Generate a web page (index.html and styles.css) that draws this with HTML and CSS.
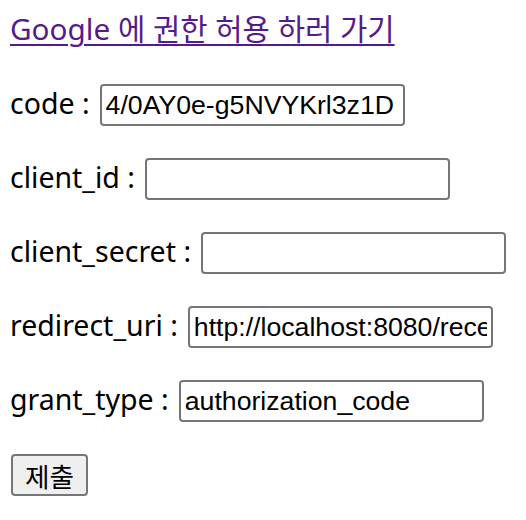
FILE: index.html
```html
<!DOCTYPE html>
<html lang="ko">
<head>
<meta charset="utf-8">
<link rel="stylesheet" href="styles.css">
</head>
<body>
<form class="form">
  <div class="row link-row"><a class="auth-link" href="#">Google 에 권한 허용 하러 가기</a></div>
  <div class="row"><label class="label" for="code">code :</label><input class="field" id="code" type="text" value="4/0AY0e-g5NVYKrl3z1D"></div>
  <div class="row"><label class="label" for="cid">client_id :</label><input class="field" id="cid" type="text" value=""></div>
  <div class="row"><label class="label" for="csec">client_secret :</label><input class="field" id="csec" type="text" value=""></div>
  <div class="row"><label class="label" for="ruri">redirect_uri :</label><input class="field" id="ruri" type="text" value="http://localhost:8080/receive"></div>
  <div class="row"><label class="label" for="gt">grant_type :</label><input class="field" id="gt" type="text" value="authorization_code"></div>
  <div class="row"><button class="submit" type="button">제출</button></div>
</form>
</body>
</html>
```
FILE: styles.css
```css
html, body {
  margin: 0;
  padding: 0;
  background: #ffffff;
}
.form {
  display: flex;
  flex-direction: column;
  gap: 32px;
  padding: 10px 0 0 10px;
  font-family: "Noto Sans", "Noto Sans CJK KR", sans-serif;
  font-size: 28.5px;
  color: #000;
}
.row {
  display: flex;
  align-items: baseline;
  height: 42px;
  gap: 10px;
}
.link-row {
  align-items: flex-start;
}
.auth-link {
  display: block;
  font-size: 29.7px;
  line-height: 37px;
  color: #551a8b;
  text-decoration: underline;
  text-decoration-thickness: 2px;
  text-underline-offset: 4px;
  white-space: nowrap;
}
.label {
  white-space: nowrap;
  line-height: 30px;
}
.field {
  box-sizing: border-box;
  width: 305px;
  height: 42px;
  margin: 0;
  padding: 2px 4px;
  border: 2px solid #767676;
  border-radius: 4px;
  font-family: "Liberation Sans", Arial, sans-serif;
  font-size: 26.67px;
  color: #000;
  background: #fff;
}
.submit {
  box-sizing: border-box;
  width: 77px;
  height: 42px;
  margin: 0 0 0 1px;
  padding: 0;
  border: 2px solid #767676;
  border-radius: 4px;
  background: #efefef;
  font-family: "Noto Sans CJK KR", sans-serif;
  font-size: 26.67px;
  color: #000;
}
```
